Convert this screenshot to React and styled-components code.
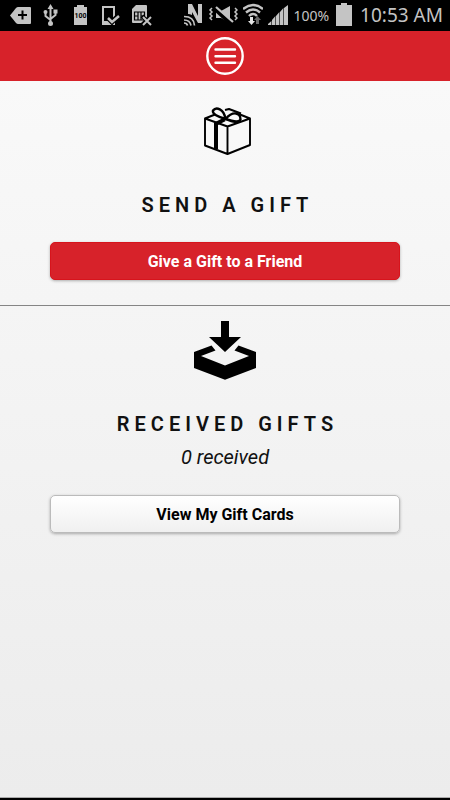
import React from 'react';
import styled, { createGlobalStyle } from 'styled-components';

const GlobalStyle = createGlobalStyle`
  * {
    box-sizing: border-box;
  }
  body {
    margin: 0;
    background: #000;
    font-family: Roboto, "Liberation Sans", sans-serif;
    color: #111;
  }
`;
const Screen = styled.div`
  display: flex;
  flex-direction: column;
  min-height: 100vh;
  border-bottom: 2px solid #000;
`;
const StatusBar = styled.div`
  display: flex;
  justify-content: space-between;
  height: 31px;
  padding: 0 7px 0 6px;
  background: #000;
  color: #c4c4c4;
  font-family: "Noto Sans", sans-serif;
`;
const Notifications = styled.div`
  display: flex;
`;
const SystemStatus = styled.div`
  display: flex;
  align-items: center;
  gap: 5px;
`;
const StatusIcon = styled.svg`
  display: block;
  flex: none;
  width: ${({ $width }) => $width}px;
  height: 31px;
`;
const Percent = styled.span`
  font-size: 14px;
`;
const Clock = styled.time`
  font-size: 19px;
  line-height: 31px;
`;
const Header = styled.header`
  display: flex;
  justify-content: center;
  align-items: center;
  height: 50px;
  background: #d7222a;
`;
const MenuButton = styled.button`
  width: 38px;
  height: 38px;
  padding: 0;
  border: 0;
  background: none;
  cursor: pointer;

  svg {
    display: block;
  }
`;
const Main = styled.main`
  flex: 1;
  background: linear-gradient(#f9f9f9, #ececec);
  border-bottom: 1px solid #aaa;
`;
const Section = styled.section`
  display: flex;
  flex-direction: column;
  align-items: center;
  padding: ${({ $top }) => $top}px 50px 25px;

  & + & {
    border-top: 1px solid #858585;
  }
`;
const Title = styled.h2`
  margin: ${({ $top }) => $top}px 0 0;
  padding-left: 5px;
  font-size: 20px;
  font-weight: 600;
  line-height: 24px;
  letter-spacing: 5px;
  text-transform: uppercase;
`;
const Count = styled.p`
  margin: 9px 0 1px;
  font-size: 20px;
  font-style: italic;
  font-weight: 400;
  line-height: 24px;
`;
const Button = styled.button`
  width: 100%;
  height: 38px;
  margin-top: 25px;
  padding: 0;
  border: 1px solid ${({ $primary }) => ($primary ? '#d7141c' : '#bbb')};
  border-radius: 5px;
  background: ${({ $primary }) => ($primary ? '#d7222a' : 'linear-gradient(#fff, #f0f0f0)')};
  box-shadow: 0 1px 3px rgba(0, 0, 0, 0.3);
  color: ${({ $primary }) => ($primary ? '#fff' : '#000')};
  font-family: inherit;
  font-size: 16px;
  font-weight: 700;
  cursor: pointer;
`;

const BackIcon = () => (
  <StatusIcon $width={30} viewBox="0 0 30 31" aria-hidden="true">
    <path d="M4 15.500L10 8q1-1 2-1h12q1 0 1 1v15q0 1-1 1H12q-1 0-2-1z" fill="#c4c4c4" />
    <path d="M16.500 10.500v9M12 15h9" stroke="#000" strokeWidth="2" />
  </StatusIcon>
);

const UsbIcon = () => (
  <StatusIcon $width={30} viewBox="0 0 30 31" aria-hidden="true">
    <g stroke="#c4c4c4" strokeWidth="2" fill="none">
      <path d="M14.500 7v17M9.500 12v4l5 4M19.500 12v3l-5 4" />
    </g>
    <g fill="#c4c4c4">
      <path d="M14.500 4l3 5h-6zM17.500 9.500h4v4h-4z" />
      <circle cx="9.500" cy="12" r="2" />
      <circle cx="14.500" cy="23.500" r="2.500" />
    </g>
  </StatusIcon>
);

const FullBatteryIcon = () => (
  <StatusIcon $width={30} viewBox="0 0 30 31" aria-hidden="true">
    <path d="M8 7h3V5h7v2h3v18H8z" fill="#c4c4c4" />
    <text x="14.500" y="18" textAnchor="middle" fontFamily="Roboto, sans-serif" fontSize="7" fontWeight="700" fill="#000">100</text>
  </StatusIcon>
);

const DeviceCheckIcon = () => (
  <StatusIcon $width={30} viewBox="0 0 30 31" aria-hidden="true">
    <path d="M6 6h13v19H6zM8 8v13h9V8z" fill="#c4c4c4" fillRule="evenodd" />
    <path d="M12 18l4 4 7-7" stroke="#000" strokeWidth="5" fill="none" />
    <path d="M12 18l4 4 7-6" stroke="#c4c4c4" strokeWidth="2.500" fill="none" />
  </StatusIcon>
);

const SimErrorIcon = () => (
  <StatusIcon $width={30} viewBox="0 0 30 31" aria-hidden="true">
    <path d="M6 9l4-4h10q1 0 1 1v17H7q-1 0-1-1z" fill="#c4c4c4" />
    <path d="M8.500 12v8h10v-8zM12 12v8M15 12v8M8 16h4M15 16h4" stroke="#000" strokeWidth="1.200" fill="none" />
    <path d="M16 16l9 9M25 16l-9 9" stroke="#000" strokeWidth="4" />
    <path d="M17 17l8 8M25 17l-8 8" stroke="#c4c4c4" strokeWidth="2" />
  </StatusIcon>
);

const NfcIcon = () => (
  <StatusIcon $width={20} viewBox="0 0 20 31" aria-hidden="true">
    <path d="M5 4h4l6 12V4h4v19h-4L9 12v3q-2-1-4-1z" fill="#c4c4c4" />
    <g stroke="#c4c4c4" strokeWidth="1.700" fill="none">
      <path d="M1 16.500q10 0 10.500 9M1 20q6 0 7 5.500M1 23q3 0 3.500 2.500" />
    </g>
  </StatusIcon>
);

const VibrateIcon = () => (
  <StatusIcon $width={30} viewBox="0 0 30 31" aria-hidden="true">
    <path d="M8 11h5l9-5v17l-9-5H8z" fill="#c4c4c4" />
    <path d="M7 9l16 15" stroke="#000" strokeWidth="4" />
    <path d="M8 7l17 15" stroke="#c4c4c4" strokeWidth="2.200" />
    <path d="M4 8L2 10l2 2-2 2 2 2-2 2 2 2M27 8l2 2-2 2 2 2-2 2 2 2-2 2" stroke="#c4c4c4" strokeWidth="1.500" fill="none" />
  </StatusIcon>
);

const WifiIcon = () => (
  <StatusIcon $width={20} viewBox="0 0 20 31" aria-hidden="true">
    <g stroke="#c4c4c4" strokeWidth="2.400" fill="none">
      <path d="M0 9q10-8 20 0M3 12.500q7-6 14 0M6 16q4-4 8 0" />
    </g>
    <path d="M7 17h3v4h2l-3.500 4L5 21h2z" fill="#e4e4e4" />
    <path d="M13 24v-4h-2l3.500-4 3.500 4h-2v4z" fill="#686868" />
  </StatusIcon>
);

const SignalIcon = () => (
  <StatusIcon $width={20} viewBox="0 0 20 31" aria-hidden="true">
    <path d="M0 25v-1l3.400-3v4zM4 25v-5l3.400-4v9zM8 25V16l3.400-4v13zM12 25V12l3.400-4v17zM16 25V8l4-3v20z" fill="#c4c4c4" />
  </StatusIcon>
);

const BatteryIcon = () => (
  <StatusIcon $width={21} viewBox="0 0 21 31" aria-hidden="true">
    <path d="M2 5h5V3h6v2h5v21H2z" fill="#c4c4c4" />
  </StatusIcon>
);

const MenuIcon = () => (
  <svg width="38" height="38" viewBox="0 0 38 38" fill="none" stroke="#fff" aria-hidden="true">
    <circle cx="19" cy="19" r="17.700" strokeWidth="2.400" />
    <path d="M9.500 12.500h19.500M9.500 19.200h19.500M9.500 25.800h19.500" strokeWidth="2.400" strokeLinecap="round" />
  </svg>
);

const GiftIcon = () => (
  <svg width="52" height="48" viewBox="-4 0 52 48" fill="none" stroke="#000" strokeWidth="1.900" strokeLinejoin="round" aria-hidden="true">
    <path d="M12 7.500L2 11.500v27L24.500 47l22.500-9V11.500L37 7.500M2 11.500L24.500 19.500 47 11.500M24.500 19.500V47" />
    <path d="M22 3l4-1 12 4.500" />
    <path d="M13 16v26" strokeWidth="4" />
    <path d="M12.500 17l9-4.500" strokeWidth="4" />
    <path d="M22.500 12C15 10 9 7 10 3.500c3-4 11-2 12.500 8.500z" strokeWidth="2.400" />
    <path d="M22.500 12c7-8 15-7 15 0.500-2 4-8 2-15-0.500z" strokeWidth="2.400" />
  </svg>
);

const InboxIcon = () => (
  <svg width="64" height="60" viewBox="0 0 64 60" aria-hidden="true">
    <path d="M28 1h8v16h12L32 32 16 17h12z" />
    <path d="M1 32l17.500-6.500 4 5L8 36l24 9.500L56 36l-14.500-5.500 4-5L63 32v16L32 59.700 1 48z" />
  </svg>
);

function App() {
  return (
    <>
      <GlobalStyle />
      <Screen>
        <StatusBar>
          <Notifications>
            <BackIcon />
            <UsbIcon />
            <FullBatteryIcon />
            <DeviceCheckIcon />
            <SimErrorIcon />
          </Notifications>
          <SystemStatus>
            <NfcIcon />
            <VibrateIcon />
            <WifiIcon />
            <SignalIcon />
            <Percent>100%</Percent>
            <BatteryIcon />
            <Clock>10:53 AM</Clock>
          </SystemStatus>
        </StatusBar>
        <Header>
          <MenuButton type="button" aria-label="Menu">
            <MenuIcon />
          </MenuButton>
        </Header>
        <Main>
          <Section $top={26}>
            <GiftIcon />
            <Title $top={38}>Send a Gift</Title>
            <Button type="button" $primary>Give a Gift to a Friend</Button>
          </Section>
          <Section $top={14}>
            <InboxIcon />
            <Title $top={32}>Received Gifts</Title>
            <Count>0 received</Count>
            <Button type="button">View My Gift Cards</Button>
          </Section>
        </Main>
      </Screen>
    </>
  );
}

export default App;
